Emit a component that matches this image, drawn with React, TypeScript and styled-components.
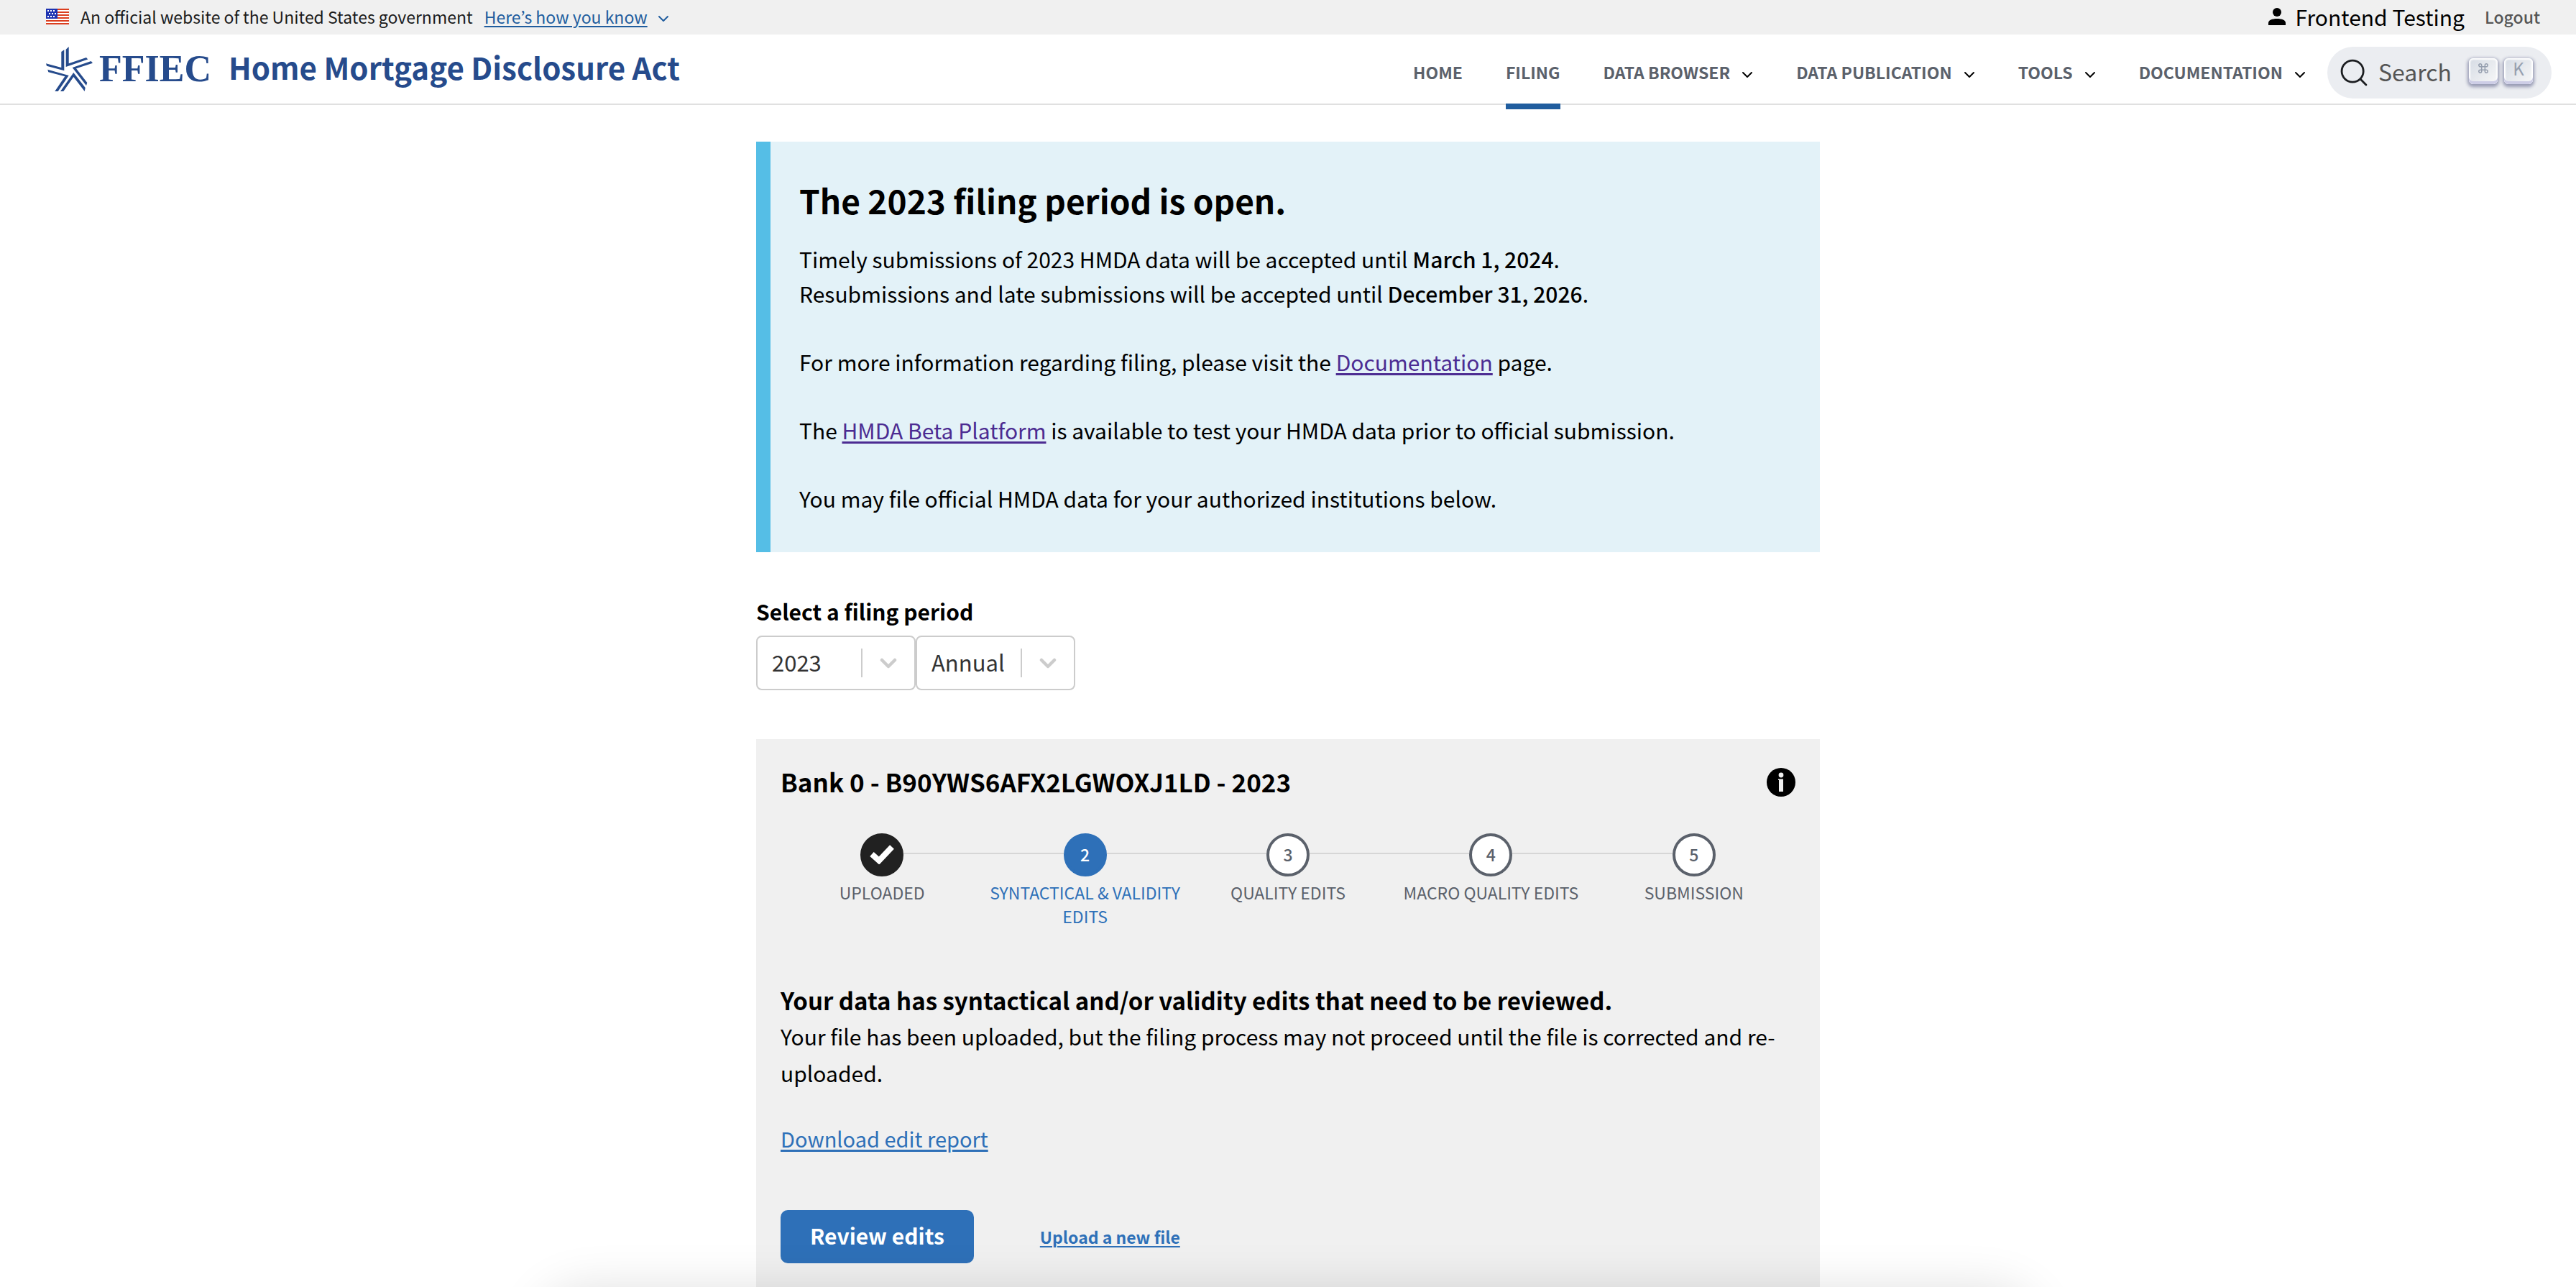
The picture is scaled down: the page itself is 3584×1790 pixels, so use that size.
import React from 'react';
import styled, { createGlobalStyle, css } from 'styled-components';

const sans = `"Noto Sans CJK KR", "Noto Sans", sans-serif`;

const GlobalStyle = createGlobalStyle`
  *, *::before, *::after { box-sizing: border-box; }
  body { margin: 0; background: #fff; color: #000; font-family: ${sans}; }
  h1, h2, h3, p, ol { margin: 0; padding: 0; }
  button, select { font-family: inherit; }
`;

const Page = styled.div`
  min-height: 100vh;
`;

/* ---------- government banner ---------- */

const Banner = styled.div`
  display: flex;
  align-items: center;
  justify-content: space-between;
  height: 48px;
  padding: 0 50px 2px 64px;
  background: #f0f0f0;
`;

const BannerGroup = styled.div<{ $gap: number }>`
  display: flex;
  align-items: center;
  gap: ${(p) => p.$gap}px;
`;

const BannerText = styled.span`
  color: #1b1b1b;
  font-size: 23px;
  line-height: 40px;
`;

const BannerToggle = styled.button`
  display: flex;
  align-items: center;
  gap: 14px;
  padding: 0;
  border: 0;
  background: none;
  color: #205d9e;
  font-size: 23px;
  line-height: 40px;
  span { text-decoration: underline; text-decoration-thickness: 2px; text-underline-offset: 3px; }
  svg { margin-top: 6px; }
`;

const UserName = styled.a`
  display: flex;
  align-items: center;
  gap: 14px;
  color: #000;
  font-size: 30px;
  line-height: 44px;
  text-decoration: none;
`;

const Logout = styled.a`
  color: #555;
  font-size: 23px;
  font-weight: 500;
  line-height: 40px;
  text-decoration: none;
`;

/* ---------- header ---------- */

const Header = styled.header`
  display: flex;
  align-items: stretch;
  justify-content: space-between;
  height: 98px;
  padding: 0 34px 0 64px;
  border-bottom: 2px solid #e0e0e0;
`;

const Brand = styled.a`
  display: flex;
  align-items: center;
  color: #264b8c;
  text-decoration: none;
`;

const LogoText = styled.span`
  margin: 0 24px 0 8px;
  font-family: "Liberation Serif", serif;
  font-size: 52px;
  font-weight: 700;
  line-height: 60px;
`;

const SiteTitle = styled.span`
  padding-bottom: 6px;
  font-size: 42px;
  font-weight: 700;
  line-height: 60px;
`;

const Nav = styled.nav`
  display: flex;
  align-items: stretch;
`;

const NavLink = styled.a<{ $active?: boolean }>`
  display: flex;
  align-items: center;
  gap: 16px;
  margin: 0 30px;
  padding-top: 8px;
  color: #5b616b;
  font-size: 23px;
  font-weight: 700;
  text-decoration: none;
  svg { margin-top: 8px; }
  ${(p) =>
    p.$active &&
    css`
      position: relative;
      &::after {
        content: '';
        position: absolute;
        left: 0;
        right: 0;
        top: 100%;
        height: 8px;
        background: #205d9e;
      }
    `}
`;

const SearchButton = styled.button`
  display: flex;
  align-items: center;
  align-self: center;
  height: 72px;
  margin-top: 10px;
  padding: 0 26px 0 17px;
  border: 0;
  border-radius: 36px;
  background: #ebedf1;
  color: #555;
  font-size: 32px;
`;

const SearchLabel = styled.span`
  margin: 0 24px 0 14px;
  padding-bottom: 4px;
  line-height: 48px;
`;

const Keys = styled.span`
  display: flex;
  gap: 9px;
  margin-bottom: 4px;
`;

const Key = styled.kbd`
  display: flex;
  align-items: center;
  justify-content: center;
  width: 40px;
  height: 36px;
  padding-bottom: 8px;
  border-radius: 6px;
  background: linear-gradient(-225deg, #d5dbe4, #f8f8f8);
  box-shadow: inset 0 -4px 0 0 #cdcde6, inset 0 0 2px 2px #fff, 0 2px 4px 2px rgba(30, 35, 90, 0.4);
  color: #969faf;
  font-family: ${sans};
  font-size: 24px;
  line-height: 28px;
`;

/* ---------- page body ---------- */

const Main = styled.main`
  display: flex;
  flex-direction: column;
  max-width: 1480px;
  margin: 51px auto 0;
`;

const Alert = styled.section`
  padding: 46px 40px 51px;
  border-left: 20px solid #55bee6;
  background: #e3f2f8;
`;

const AlertTitle = styled.h2`
  margin-bottom: 23px;
  font-size: 46px;
  line-height: 70px;
`;

const AlertText = styled.p`
  font-size: 30px;
  line-height: 48px;
  & + & { margin-top: 47px; }
  strong { font-weight: 500; }
`;

const VisitedLink = styled.a`
  color: #4c2c92;
  text-decoration: underline;
  text-decoration-thickness: 3px;
  text-underline-offset: 3px;
`;

const Period = styled.fieldset`
  min-width: 0;
  margin: 60px 0 0;
  padding: 0;
  border: 0;
`;

const PeriodTitle = styled.legend`
  padding: 0;
  font-size: 30px;
  font-weight: 700;
  line-height: 44px;
`;

const PeriodFields = styled.div`
  display: flex;
  padding-top: 12px;
`;

const Field = styled.label`
  position: relative;
  width: 222px;
`;

const Select = styled.select`
  appearance: none;
  width: 100%;
  height: 76px;
  padding: 0 80px 4px 20px;
  border: 2px solid #ccc;
  border-radius: 8px;
  background: #fff;
  color: #333;
  font-size: 31px;
`;

const FieldMark = styled.span`
  position: absolute;
  top: 18px;
  right: 26px;
  display: flex;
  align-items: center;
  height: 40px;
  padding-left: 24px;
  border-left: 2px solid #ccc;
  pointer-events: none;
`;

const Card = styled.section`
  margin-top: 68px;
  padding: 34px 34px 80px;
  background: #f0f0f0;
`;

const CardHead = styled.div`
  display: flex;
  align-items: center;
  justify-content: space-between;
`;

const CardTitle = styled.h2`
  padding-bottom: 2px;
  font-size: 35px;
  line-height: 50px;
`;

const IconButton = styled.button`
  display: flex;
  padding: 0;
  border: 0;
  background: none;
`;

const Steps = styled.ol`
  display: grid;
  grid-template-columns: repeat(5, 1fr);
  margin-top: 45px;
  list-style: none;
`;

type StepState = 'done' | 'current' | 'todo';

const Step = styled.li<{ $state: StepState }>`
  display: flex;
  flex-direction: column;
  align-items: center;
  color: ${(p) => (p.$state === 'current' ? '#2e70b8' : '#5b616b')};
  font-size: 23px;
  line-height: 33px;
  text-align: center;
`;

const StepTrack = styled.div`
  display: flex;
  align-items: center;
  align-self: stretch;
`;

const StepLine = styled.span<{ $hidden?: boolean }>`
  flex: 1;
  height: 2px;
  margin-bottom: 4px;
  background: ${(p) => (p.$hidden ? 'transparent' : '#d6d6d6')};
`;

const circleColors = {
  done: css`background: #212121; border-color: #212121; color: #fff;`,
  current: css`background: #2e70b8; border-color: #2e70b8; color: #fff;`,
  todo: css`background: #fff; border-color: #5b616b; color: #5b616b;`,
};

const StepCircle = styled.span<{ $state: StepState }>`
  display: flex;
  align-items: center;
  justify-content: center;
  width: 60px;
  height: 60px;
  padding-bottom: 2px;
  border: 4px solid;
  border-radius: 50%;
  font-weight: 500;
  ${(p) => circleColors[p.$state]}
`;

const StepLabel = styled.span`
  max-width: 282px;
  margin-top: 6px;
`;

const StatusTitle = styled.h3`
  margin-top: 75px;
  font-size: 33px;
  line-height: 50px;
`;

const StatusText = styled.p`
  font-size: 30px;
  line-height: 51px;
`;

const ReportLink = styled.a`
  display: inline-block;
  margin-top: 43px;
  color: #2e70b8;
  font-size: 29px;
  line-height: 44px;
  text-decoration-thickness: 3px;
  text-underline-offset: 3px;
`;

const Actions = styled.div`
  display: flex;
  align-items: center;
  gap: 92px;
  margin-top: 78px;
`;

const PrimaryButton = styled.button`
  height: 74px;
  padding: 0 41px 4px;
  border: 0;
  border-radius: 10px;
  background: #2e70b8;
  color: #fff;
  font-size: 30px;
  font-weight: 700;
`;

const UploadLink = styled.a`
  color: #2e70b8;
  font-size: 23px;
  font-weight: 700;
  line-height: 36px;
  text-decoration-thickness: 2px;
  text-underline-offset: 3px;
`;

const BottomShade = styled.div`
  position: fixed;
  left: 21%;
  right: 21%;
  bottom: -206px;
  height: 200px;
  border-radius: 60px;
  box-shadow: 0 0 70px rgba(0, 0, 0, 0.14);
  pointer-events: none;
`;

/* ---------- drawings ---------- */

const Flag = () => (
  <svg width="32" height="22" viewBox="0 0 32 22" aria-hidden="true">
    <rect width="32" height="22" fill="#fff" />
    {[0, 4, 8, 12, 16, 20].map((y) => (
      <rect key={y} y={y} width="32" height="2" fill="#db3e1f" />
    ))}
    <rect width="16" height="14" fill="#1e33b1" />
    {[2, 6, 10].map((y, row) =>
      [2, 6, 10].map((x) => (
        <rect key={`${x}-${y}`} x={x + (row === 1 ? 2 : 0)} y={y} width="2" height="2" fill="#fff" />
      ))
    )}
  </svg>
);

const Star = () => (
  <svg width="66" height="63" viewBox="0 0 66 63" fill="#264b8c" aria-hidden="true">
    <path d="M21.3 7 L25.3 4.3 V33.3 L1 26.7 L0 23.3 L21.3 29 Z" />
    <path d="M27.7 3.7 L31.7 0 V23.3 L56 15 L58.3 17.5 L27.7 28 Z" />
    <path d="M62.7 20 L65 22.7 L42 30.3 L57.3 50 L56 54 L36.7 29 Z" />
    <path d="M2.3 31.7 L31.7 40 L16.7 62 H12.3 L26.3 41.3 L3.3 35.3 Z" />
    <path d="M20 62 L38.3 36 L54.7 57 L53.7 62 L38.3 42 L24.3 62 Z" />
  </svg>
);

const Chevron = ({ size, stroke, color }: { size: number; stroke: number; color: string }) => (
  <svg width={size} height={(size * 5) / 8} viewBox="0 0 16 10" fill="none" aria-hidden="true">
    <path d="M2 2 L8 8 L14 2" stroke={color} strokeWidth={stroke} strokeLinecap="round" strokeLinejoin="round" />
  </svg>
);

const Person = () => (
  <svg width="24" height="24" viewBox="0 0 24 24" aria-hidden="true">
    <circle cx="12" cy="6" r="6" />
    <path d="M0 24 V21 C0 17 5 15 12 15 S24 17 24 21 V24 Z" />
  </svg>
);

const Magnifier = () => (
  <svg width="40" height="40" viewBox="0 0 20 20" fill="none" aria-hidden="true">
    <path
      d="M14.386 14.386l4.0877 4.0877-4.0877-4.0877c-2.9418 2.9419-7.7115 2.9419-10.6533 0-2.9419-2.9418-2.9419-7.7115 0-10.6533 2.9418-2.9419 7.7115-2.9419 10.6533 0 2.9419 2.9418 2.9419 7.7115 0 10.6533z"
      stroke="#1c1e21"
      strokeWidth="1.4"
      strokeLinecap="round"
      strokeLinejoin="round"
    />
  </svg>
);

const CommandGlyph = () => (
  <svg width="14" height="14" viewBox="0 0 18 18" fill="none" stroke="#969faf" strokeWidth="2" aria-hidden="true">
    <path d="M6 6 H12 V12 H6 Z M6 6 H4 A2.5 2.5 0 1 1 6 4 Z M12 6 V4 A2.5 2.5 0 1 1 14 6 Z M12 12 H14 A2.5 2.5 0 1 1 12 14 Z M6 12 V14 A2.5 2.5 0 1 1 4 12 Z" />
  </svg>
);

const Check = () => (
  <svg width="36" height="28" viewBox="0 0 36 28" fill="none" aria-hidden="true">
    <path d="M4 14 L14 23 L32 4" stroke="#fff" strokeWidth="8" strokeLinejoin="miter" />
  </svg>
);

const Info = () => (
  <svg width="40" height="40" viewBox="0 0 40 40" aria-hidden="true">
    <circle cx="20" cy="20" r="20" />
    <circle cx="20" cy="10" r="3.4" fill="#f0f0f0" />
    <path d="M16 15.5 H23 V33 H17 V17 H16 Z" fill="#f0f0f0" />
  </svg>
);

/* ---------- content ---------- */

const navItems = [
  { label: 'HOME' },
  { label: 'FILING', active: true },
  { label: 'DATA BROWSER', menu: true },
  { label: 'DATA PUBLICATION', menu: true },
  { label: 'TOOLS', menu: true },
  { label: 'DOCUMENTATION', menu: true },
];

const steps: { label: string; state: StepState }[] = [
  { label: 'UPLOADED', state: 'done' },
  { label: 'SYNTACTICAL & VALIDITY EDITS', state: 'current' },
  { label: 'QUALITY EDITS', state: 'todo' },
  { label: 'MACRO QUALITY EDITS', state: 'todo' },
  { label: 'SUBMISSION', state: 'todo' },
];

const PeriodSelect = ({ name, options }: { name: string; options: string[] }) => (
  <Field>
    <Select aria-label={name} defaultValue={options[0]}>
      {options.map((o) => (
        <option key={o}>{o}</option>
      ))}
    </Select>
    <FieldMark>
      <Chevron size={24} stroke={3} color="#ccc" />
    </FieldMark>
  </Field>
);

export default function App() {
  return (
    <Page>
      <GlobalStyle />
      <Banner>
        <BannerGroup $gap={16}>
          <Flag />
          <BannerText>An official website of the United States government</BannerText>
          <BannerToggle type="button">
            <span>Here’s how you know</span>
            <Chevron size={16} stroke={2} color="#205d9e" />
          </BannerToggle>
        </BannerGroup>
        <BannerGroup $gap={28}>
          <UserName href="#profile">
            <Person />
            Frontend Testing
          </UserName>
          <Logout href="#logout">Logout</Logout>
        </BannerGroup>
      </Banner>

      <Header>
        <Brand href="#home">
          <Star />
          <LogoText>FFIEC</LogoText>
          <SiteTitle>Home Mortgage Disclosure Act</SiteTitle>
        </Brand>
        <Nav>
          {navItems.map((item) => (
            <NavLink key={item.label} href="#nav" $active={item.active}>
              {item.label}
              {item.menu && <Chevron size={16} stroke={2} color="#000" />}
            </NavLink>
          ))}
          <SearchButton type="button">
            <Magnifier />
            <SearchLabel>Search</SearchLabel>
            <Keys>
              <Key>
                <CommandGlyph />
              </Key>
              <Key>K</Key>
            </Keys>
          </SearchButton>
        </Nav>
      </Header>

      <Main>
        <Alert>
          <AlertTitle>The 2023 filing period is open.</AlertTitle>
          <AlertText>
            Timely submissions of 2023 HMDA data will be accepted until <strong>March 1, 2024</strong>.
            <br />
            Resubmissions and late submissions will be accepted until <strong>December 31, 2026</strong>.
          </AlertText>
          <AlertText>
            For more information regarding filing, please visit the{' '}
            <VisitedLink href="#documentation">Documentation</VisitedLink> page.
          </AlertText>
          <AlertText>
            The <VisitedLink href="#beta">HMDA Beta Platform</VisitedLink> is available to test your HMDA data prior to
            official submission.
          </AlertText>
          <AlertText>You may file official HMDA data for your authorized institutions below.</AlertText>
        </Alert>

        <Period>
          <PeriodTitle>Select a filing period</PeriodTitle>
          <PeriodFields>
            <PeriodSelect name="Year" options={['2023']} />
            <PeriodSelect name="Quarter" options={['Annual']} />
          </PeriodFields>
        </Period>

        <Card>
          <CardHead>
            <CardTitle>Bank 0 - B90YWS6AFX2LGWOXJ1LD - 2023</CardTitle>
            <IconButton type="button" aria-label="Institution details">
              <Info />
            </IconButton>
          </CardHead>
          <Steps>
            {steps.map((step, i) => (
              <Step key={step.label} $state={step.state}>
                <StepTrack>
                  <StepLine $hidden={i === 0} />
                  <StepCircle $state={step.state}>{step.state === 'done' ? <Check /> : i + 1}</StepCircle>
                  <StepLine $hidden={i === steps.length - 1} />
                </StepTrack>
                <StepLabel>{step.label}</StepLabel>
              </Step>
            ))}
          </Steps>
          <StatusTitle>Your data has syntactical and/or validity edits that need to be reviewed.</StatusTitle>
          <StatusText>
            Your file has been uploaded, but the filing process may not proceed until the file is corrected and
            re-uploaded.
          </StatusText>
          <ReportLink href="#report">Download edit report</ReportLink>
          <Actions>
            <PrimaryButton type="button">Review edits</PrimaryButton>
            <UploadLink href="#upload">Upload a new file</UploadLink>
          </Actions>
        </Card>
      </Main>
      <BottomShade />
    </Page>
  );
}
